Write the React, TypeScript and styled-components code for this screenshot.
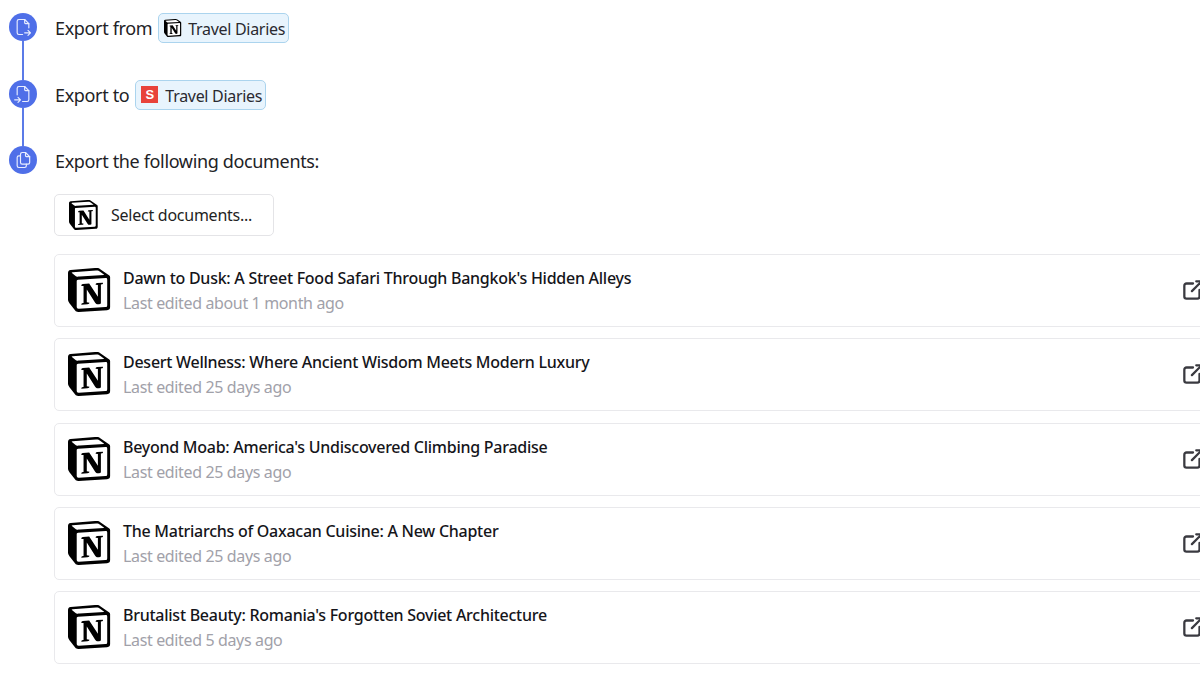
import React from 'react';
import styled, { createGlobalStyle } from 'styled-components';
import { TbFileExport, TbFileImport, TbFiles, TbExternalLink } from 'react-icons/tb';

const documents = [
  { title: "Dawn to Dusk: A Street Food Safari Through Bangkok's Hidden Alleys", edited: 'Last edited about 1 month ago' },
  { title: 'Desert Wellness: Where Ancient Wisdom Meets Modern Luxury', edited: 'Last edited 25 days ago' },
  { title: "Beyond Moab: America's Undiscovered Climbing Paradise", edited: 'Last edited 25 days ago' },
  { title: 'The Matriarchs of Oaxacan Cuisine: A New Chapter', edited: 'Last edited 25 days ago' },
  { title: "Brutalist Beauty: Romania's Forgotten Soviet Architecture", edited: 'Last edited 5 days ago' },
];

const NotionLogo: React.FC<{ size: number }> = ({ size }) => (
  <svg width={size} height={size} viewBox="0 0 100 100" style={{ display: 'block', flexShrink: 0 }}>
    <path
      fill="#fff"
      d="M6.017 4.313l55.333 -4.087c6.797 -0.583 8.543 -0.19 12.817 2.917l17.663 12.443c2.913 2.14 3.883 2.723 3.883 5.053v68.243c0 4.277 -1.553 6.807 -6.99 7.193L24.467 99.967c-4.08 0.193 -6.023 -0.39 -8.16 -3.113L3.3 79.94c-2.333 -3.113 -3.3 -5.443 -3.3 -8.167V11.113c0 -3.497 1.553 -6.413 6.017 -6.8z"
    />
    <path
      fill="#000"
      fillRule="evenodd"
      d="M61.35 0.227l-55.333 4.087C1.553 4.7 0 7.617 0 11.113v60.66c0 2.723 0.967 5.053 3.3 8.167l13.007 16.913c2.137 2.723 4.08 3.307 8.16 3.113l64.257 -3.89c5.433 -0.387 6.99 -2.917 6.99 -7.193V20.64c0 -2.21 -0.873 -2.847 -3.443 -4.733L74.167 3.143c-4.273 -3.107 -6.02 -3.5 -12.817 -2.917zM25.92 19.523c-5.247 0.353 -6.437 0.433 -9.417 -1.99L8.927 11.507c-0.77 -0.78 -0.383 -1.753 1.557 -1.947l53.193 -3.887c4.467 -0.39 6.793 1.167 8.54 2.527l9.123 6.61c0.39 0.197 1.36 1.36 0.193 1.36l-54.933 3.307 -0.68 0.047zM19.803 88.3V30.367c0 -2.53 0.777 -3.697 3.103 -3.893L86 22.78c2.14 -0.193 3.107 1.167 3.107 3.693v57.547c0 2.53 -0.39 4.67 -3.883 4.863l-60.377 3.5c-3.493 0.193 -5.043 -0.97 -5.043 -4.083zm59.6 -54.827c0.387 1.75 0 3.5 -1.75 3.7l-2.91 0.577v42.773c-2.527 1.36 -4.853 2.137 -6.797 2.137 -3.107 0 -3.883 -0.973 -6.21 -3.887l-19.03 -29.94v28.967l6.02 1.363s0 3.5 -4.857 3.5l-13.39 0.777c-0.39 -0.78 0 -2.723 1.357 -3.11l3.497 -0.97v-38.3L30.48 40.667c-0.39 -1.75 0.58 -4.277 3.3 -4.473l14.367 -0.967 19.8 30.327v-26.83l-5.047 -0.58c-0.39 -2.143 1.163 -3.7 3.103 -3.89l13.4 -0.78z"
    />
  </svg>
);

const App: React.FC = () => (
  <>
    <GlobalStyle />
    <Page>
      <Step>
        <Rail>
          <StepIcon><TbFileExport size={20} strokeWidth={1.4} /></StepIcon>
          <Connector />
        </Rail>
        <StepLabel>
          Export from
          <Chip>
            <NotionLogo size={18} />
            <ChipName>Travel Diaries</ChipName>
          </Chip>
        </StepLabel>
      </Step>
      <Step>
        <Rail>
          <StepIcon><TbFileImport size={20} strokeWidth={1.4} /></StepIcon>
          <Connector />
        </Rail>
        <StepLabel>
          Export to
          <Chip>
            <SanityMark>S</SanityMark>
            <ChipName>Travel Diaries</ChipName>
          </Chip>
        </StepLabel>
      </Step>
      <Step>
        <Rail>
          <StepIcon><TbFiles size={20} strokeWidth={1.4} /></StepIcon>
        </Rail>
        <StepBody>
          <StepLabel>Export the following documents:</StepLabel>
          <SelectButton>
            <NotionLogo size={30} />
            Select documents...
          </SelectButton>
          <DocumentList>
            {documents.map((doc) => (
              <DocumentCard key={doc.title}>
                <NotionLogo size={44} />
                <DocumentText>
                  <DocumentTitle>{doc.title}</DocumentTitle>
                  <DocumentMeta>{doc.edited}</DocumentMeta>
                </DocumentText>
                <OpenLink><TbExternalLink size={26} strokeWidth={2.1} /></OpenLink>
              </DocumentCard>
            ))}
          </DocumentList>
        </StepBody>
      </Step>
    </Page>
  </>
);

const GlobalStyle = createGlobalStyle`
  html, body {
    margin: 0;
    background: #fff;
    overflow: hidden;
  }
  body {
    font-family: "Noto Sans", "Open Sans", sans-serif;
    color: #1f1f23;
  }
`;

const Page = styled.div`
  width: 1200px;
  height: 675px;
  overflow: hidden;
  padding: 13px 0 0 9px;
  box-sizing: border-box;
`;

const Step = styled.div`
  display: flex;
  gap: 17px;
  min-height: 66.5px;
`;

const Rail = styled.div`
  display: flex;
  flex-direction: column;
  align-items: center;
  width: 28px;
  flex-shrink: 0;
`;

const StepIcon = styled.div`
  width: 28px;
  height: 28px;
  border-radius: 50%;
  background: #4f6fe8;
  color: #e8edff;
  display: flex;
  align-items: center;
  justify-content: center;
  flex-shrink: 0;
`;

const Connector = styled.div`
  width: 2px;
  flex: 1;
  background: #5b7be8;
`;

const StepLabel = styled.div`
  display: flex;
  align-items: center;
  gap: 6px;
  height: 30px;
  padding-left: 1px;
  font-size: 18px;
  letter-spacing: -0.35px;
  color: #222226;
`;

const Chip = styled.span`
  display: inline-flex;
  align-items: center;
  gap: 6px;
  height: 30px;
  padding: 0 3px 0 5px;
  box-sizing: border-box;
  background: #e8f4fd;
  border: 1px solid #abd4ee;
  border-radius: 5px;
  font-size: 16px;
  letter-spacing: -0.3px;
  color: #2a2a30;
`;

const ChipName = styled.span`
  margin-top: 2px;
`;

const SanityMark = styled.span`
  width: 17px;
  height: 17px;
  margin-right: 1px;
  background: #e8423a;
  color: #fff;
  font-size: 13px;
  font-weight: 700;
  letter-spacing: 0;
  display: flex;
  align-items: center;
  justify-content: center;
  font-family: "Liberation Sans", sans-serif;
`;

const StepBody = styled.div`
  display: flex;
  flex-direction: column;
  flex-shrink: 0;
`;

const SelectButton = styled.div`
  display: flex;
  align-items: center;
  gap: 12px;
  margin-top: 18px;
  width: 220px;
  height: 42px;
  box-sizing: border-box;
  padding-left: 14px;
  background: #fff;
  border: 1px solid #e4e4e7;
  border-radius: 5px;
  font-size: 16px;
  letter-spacing: -0.25px;
  color: #1f1f23;
`;

const DocumentList = styled.div`
  display: flex;
  flex-direction: column;
  gap: 11.25px;
  margin-top: 18px;
`;

const DocumentCard = styled.div`
  display: flex;
  align-items: center;
  gap: 11px;
  width: 1166px;
  height: 73px;
  box-sizing: border-box;
  padding: 0 13px 1px 12px;
  background: #fff;
  border: 1px solid #e9e9ec;
  border-radius: 5px;

  svg:first-child {
    margin-left: 1px;
  }
`;

const DocumentText = styled.div`
  display: flex;
  flex-direction: column;
  gap: 3px;
  flex: 1;
  min-width: 0;
  margin-top: 1px;
`;

const DocumentTitle = styled.div`
  font-size: 16px;
  line-height: 22px;
  font-weight: 500;
  letter-spacing: -0.26px;
  color: #15151a;
`;

const DocumentMeta = styled.div`
  font-size: 16px;
  line-height: 22px;
  letter-spacing: -0.36px;
  color: #a1a1a9;
`;

const OpenLink = styled.div`
  color: #3a3a40;
  display: flex;
  align-items: center;
`;

export default App;
